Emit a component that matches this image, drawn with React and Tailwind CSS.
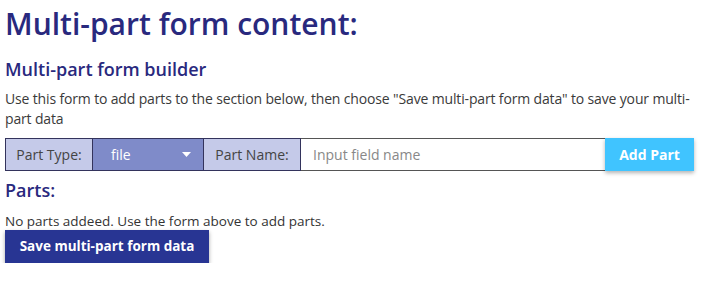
export default function App() {
  return (
    <div className="px-[5px] pt-[4px] font-['Open_Sans',sans-serif] text-[#333]">
      <h1 className="text-[30px] leading-[40px] font-semibold text-[#29297e]">
        Multi-part form content:
      </h1>
      <h2 className="mt-[12px] text-[18px] leading-[26px] font-semibold text-[#29297e]">
        Multi-part form builder
      </h2>
      <p className="mt-[7px] text-[14px] leading-[20px] tracking-[-0.15px] text-[#3a3a3a]">
        Use this form to add parts to the section below, then choose "Save multi-part form data" to save your multi-part data
      </p>
      <div className="mt-[9px] flex h-[33px] w-[690px] text-[14px]">
        <div className="flex w-[88px] items-center justify-center border border-[#33335c] bg-[#c5cae9] text-[#444]">
          Part Type:
        </div>
        <div className="flex w-[110px] items-center justify-between border-y border-[#33335c] bg-[#7f8bc9] pl-[18px] pr-[12px] text-white">
          <span>file</span>
          <svg width="9" height="5" viewBox="0 0 9 5">
            <path d="M0 0 L9 0 L4.5 5 Z" fill="#fff" />
          </svg>
        </div>
        <div className="flex w-[98px] items-center justify-center border border-[#33335c] bg-[#c5cae9] text-[#444]">
          Part Name:
        </div>
        <input
          placeholder="Input field name"
          className="w-[304px] border-y border-[#555] bg-white px-[12px] text-[14px] text-[#333] placeholder-[#888] outline-none"
        />
        <button className="w-[89px] bg-[#40c4ff] text-[14px] font-bold text-white shadow-[0_2px_4px_rgba(0,0,0,0.3)]">
          Add Part
        </button>
      </div>
      <h2 className="mt-[6px] text-[18px] leading-[26px] font-semibold text-[#29297e]">
        Parts:
      </h2>
      <p className="mt-[8px] text-[13.5px] leading-[20px] text-[#333]">
        No parts addeed. Use the form above to add parts.
      </p>
      <button className="mt-[-1px] h-[33px] w-[204px] bg-[#283593] text-[13.5px] font-bold text-white shadow-[0_2px_4px_rgba(0,0,0,0.35)]">
        Save multi-part form data
      </button>
    </div>
  );
}
